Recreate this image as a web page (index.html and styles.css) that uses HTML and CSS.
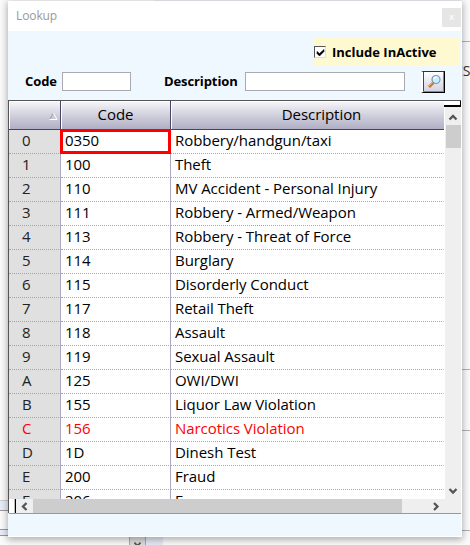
FILE: index.html
```html
<!DOCTYPE html>
<html lang="en">
<head>
<meta charset="utf-8">
<title>Lookup</title>
<link rel="stylesheet" href="styles.css">
</head>
<body>
<div class="backdrop">
  <i class="top-edge"></i>
  <i class="rule r1"></i><i class="rule r2"></i><i class="rule r3"></i><i class="rule r4"></i>
  <span class="behind">CS</span>
  <i class="left-a"></i><i class="left-b"></i>
  <div class="foot"><svg width="17" height="9" viewBox="0 0 17 9"><path d="M5 7l3.500 3.500L12 7" fill="none" stroke="#555" stroke-width="2"/></svg></div>
</div>
<main class="window">
  <header class="titlebar"><span>Lookup</span><button class="close">x</button></header>
  <section class="search">
    <div class="include"><span class="check"><svg width="9" height="9" viewBox="0 0 9 9"><path d="M1 3.500v2l2.500 2.500L8 3.500v-2L3.500 5.500z" fill="#000" stroke="#000" stroke-width=".6"/></svg></span><label>Include InActive</label></div>
    <div class="fields">
      <label class="l-code">Code</label><input class="i-code">
      <label class="l-desc">Description</label><input class="i-desc">
      <button class="find"><svg width="15" height="15" viewBox="0 0 15 15"><path d="M2 13l5-5" stroke="#c87835" stroke-width="3"/><path d="M2 12l4-4" stroke="#f2b26c"/><circle cx="9" cy="5.500" r="4" fill="#c5f0fb" stroke="#8292b8" stroke-width="1.200"/><path d="M7 5q.5-2 2.500-2" fill="none" stroke="#fff" stroke-width="1.500"/></svg></button>
    </div>
  </section>
  <section class="grid">
    <div class="middle">
      <div class="table">
        <div class="row head"><span class="key"><svg width="9" height="8" viewBox="0 0 9 8"><path d="M4.500 1L1 7" stroke="#999" fill="none"/><path d="M4.500 1L8 7.500H.5" stroke="#fff" fill="none"/></svg></span><span>Code</span><span>Description</span></div>
        <div class="row"><span class="key">0</span><span class="selected">0350</span><span>Robbery/handgun/taxi</span></div>
        <div class="row"><span class="key">1</span><span>100</span><span>Theft</span></div>
        <div class="row"><span class="key">2</span><span>110</span><span>MV Accident - Personal Injury</span></div>
        <div class="row"><span class="key">3</span><span>111</span><span>Robbery - Armed/Weapon</span></div>
        <div class="row"><span class="key">4</span><span>113</span><span>Robbery - Threat of Force</span></div>
        <div class="row"><span class="key">5</span><span>114</span><span>Burglary</span></div>
        <div class="row"><span class="key">6</span><span>115</span><span>Disorderly Conduct</span></div>
        <div class="row"><span class="key">7</span><span>117</span><span>Retail Theft</span></div>
        <div class="row"><span class="key">8</span><span>118</span><span>Assault</span></div>
        <div class="row"><span class="key">9</span><span>119</span><span>Sexual Assault</span></div>
        <div class="row"><span class="key">A</span><span>125</span><span>OWI/DWI</span></div>
        <div class="row"><span class="key">B</span><span>155</span><span>Liquor Law Violation</span></div>
        <div class="row inactive"><span class="key">C</span><span>156</span><span>Narcotics Violation</span></div>
        <div class="row"><span class="key">D</span><span>1D</span><span>Dinesh Test</span></div>
        <div class="row"><span class="key">E</span><span>200</span><span>Fraud</span></div>
        <div class="row"><span class="key">F</span><span>206</span><span>F</span></div>
      </div>
      <div class="vscroll">
        <div class="corner"></div>
        <svg width="16" height="18" viewBox="0 0 16 18"><path d="M4.500 12.500L8 9l3.500 3.500" fill="none" stroke="#555" stroke-width="2.300"/></svg>
        <div class="vthumb"></div>
        <svg class="down" width="16" height="16" viewBox="0 0 16 16"><path d="M4.500 6L8 9.500 11.500 6" fill="none" stroke="#555" stroke-width="2.300"/></svg>
      </div>
    </div>
    <div class="hscroll">
      <div class="splitter"></div>
      <svg width="17" height="14" viewBox="0 0 17 14"><path d="M10.500 4L7 7.500l3.500 3.500" fill="none" stroke="#555" stroke-width="2.300"/></svg>
      <div class="hthumb"></div>
      <svg class="right" width="16" height="14" viewBox="0 0 16 14"><path d="M6 4l3.500 3.500L6 11" fill="none" stroke="#555" stroke-width="2.300"/></svg>
    </div>
  </section>
</main>
</body>
</html>
```

FILE: styles.css
```css
* { box-sizing: border-box; }
body { margin: 0; width: 470px; height: 545px; overflow: hidden; position: relative; background: #fbfbfb; font-family: "Open Sans", "Noto Sans", sans-serif; color: #000; }

.backdrop { position: absolute; inset: 0; overflow: hidden; }
.backdrop > * { position: absolute; }
.top-edge { left: 154px; top: 0; width: 308px; height: 1px; background: #eef2f8; }
.rule { left: 455px; width: 15px; height: 1px; background: #b0b0b0; }
.r1 { top: 41px; }
.r2 { top: 369px; }
.r3 { top: 430px; }
.r4 { top: 530px; }
.behind { left: 454px; top: 61px; font-size: 14px; line-height: 20px; color: #333; }
.left-a { left: 0; top: 500px; width: 10px; height: 11px; background: #e8eef7; border-top: 1px solid #ccc; border-bottom: 1px solid #999; }
.left-b { left: 0; top: 529px; width: 10px; height: 7px; background: #e8eef7; border-top: 1px solid #999; border-bottom: 1px solid #999; }
.foot { left: 129px; top: 536px; width: 34px; height: 9px; background: #e4eaf5; }
.foot svg { display: block; background: #ddd; border-left: 1px solid #aaa; border-right: 1px solid #aaa; }

.window { position: relative; width: 454px; height: 536px; margin: 0 0 0 8px; top: 1px; background: #eff7ff; border-bottom: 1px solid #fff; border-right: 1px solid #fff; box-shadow: 0 2px 7px 1px rgba(0, 0, 0, .3); display: flex; flex-direction: column; }
.titlebar { height: 30px; flex: none; background: #fff; display: flex; justify-content: space-between; color: #999; font-size: 12px; letter-spacing: -.1px; line-height: 30px; padding-left: 8px; }
.close { width: 19px; height: 19px; margin: 7px 0 0; padding: 0 0 2px; border: 0; background: #e6e6e6; color: #f8f8f8; font: bold 9px/17px "Open Sans", sans-serif; }

.search { height: 69px; flex: none; font-size: 13px; font-weight: 700; }
.include { margin: 7px 1px 0 306px; height: 28px; background: #fff9d1; display: flex; align-items: center; }
.include label { margin-top: -1px; }
.check { width: 12px; height: 12px; margin-right: 6px; background: #fff; border: 1px solid #555; border-right-color: #ddd; border-bottom-color: #ddd; padding: 1px; }
.check svg { display: block; }
.fields { display: flex; height: 28px; padding-top: 3px; align-items: center; }
.fields label { flex: none; margin-top: -2px; letter-spacing: -.1px; }
.fields input { height: 19px; border: 1px solid #a9a9b1; background: #fff; padding: 0; outline: 0; }
.l-code { width: 37px; margin-left: 17px; }
.i-code { width: 69px; }
.l-desc { width: 81px; margin-left: 33px; }
.i-desc { width: 160px; }
.find { width: 24px; height: 22px; margin-left: 16px; padding: 2px 2px 2px 4px; border: solid; border-width: 1px 1px 1px 2px; border-color: #333 #000 #000 #fff; box-shadow: inset -1px -1px #888, inset 1px 0 #444; background: linear-gradient(#fff, #d0d0e2); }
.find svg { display: block; }

.grid { height: 413px; border-left: 1px solid #555; border-top: 1px solid #555; }
.middle { display: flex; height: 398px; overflow: hidden; }
.table { width: 435px; font-size: 15px; letter-spacing: -.05px; line-height: 20px; background: #fff; }
.row { display: grid; grid-template-columns: 52px 110px 273px; height: 24px; }
.row > span { border-bottom: 1px dotted #a4a2c0; border-right: 1px solid #aaa8c3; padding-left: 4px; white-space: nowrap; }
.row > span:last-child { border-right: 1px solid #fff; }
.row > .key { background: #e0e0e0; padding-left: 13px; color: #222; }
.row.inactive > span { color: #f00; }
.row > .selected { border: 3px solid #f00; margin: -1px 0 0 -1px; padding-left: 2px; line-height: 16px; }
.row.head { height: 29px; line-height: 26px; background: linear-gradient(#f7f7fa, #d0cfdc 50%, #aeacc3); }
.row.head > span { text-align: center; padding: 0; border-bottom: 1px solid #484361; border-right: 1px solid #484361; box-shadow: inset 1px 1px #fff; }
.row.head > span:last-child { border-right: 0; padding-left: 28px; }
.row.head > .key { background: none; text-align: right; padding: 0 2px 0 0; }

.vscroll { width: 18px; background: linear-gradient(90deg, #fff 1px, #efefef 1px); display: flex; flex-direction: column; align-items: center; flex: none; }
.vscroll svg { flex: none; display: block; }
.corner { width: 18px; height: 6px; background: #fff; border: solid #000; border-width: 0 2px 2px 0; flex: none; }
.vthumb { width: 15px; height: 23px; background: #cdcdcd; flex: none; }
.vscroll .down { margin-top: auto; }
.hscroll { height: 15px; margin-right: 0; border-bottom: 1px solid #999; background: #efefef; display: flex; }
.splitter { width: 7px; background: #fff; border-right: 1px solid #000; box-shadow: inset -1px 0 #bbb; }
.hthumb { width: 369px; background: #cdcdcd; }
.right { margin-left: 26px; }
```
